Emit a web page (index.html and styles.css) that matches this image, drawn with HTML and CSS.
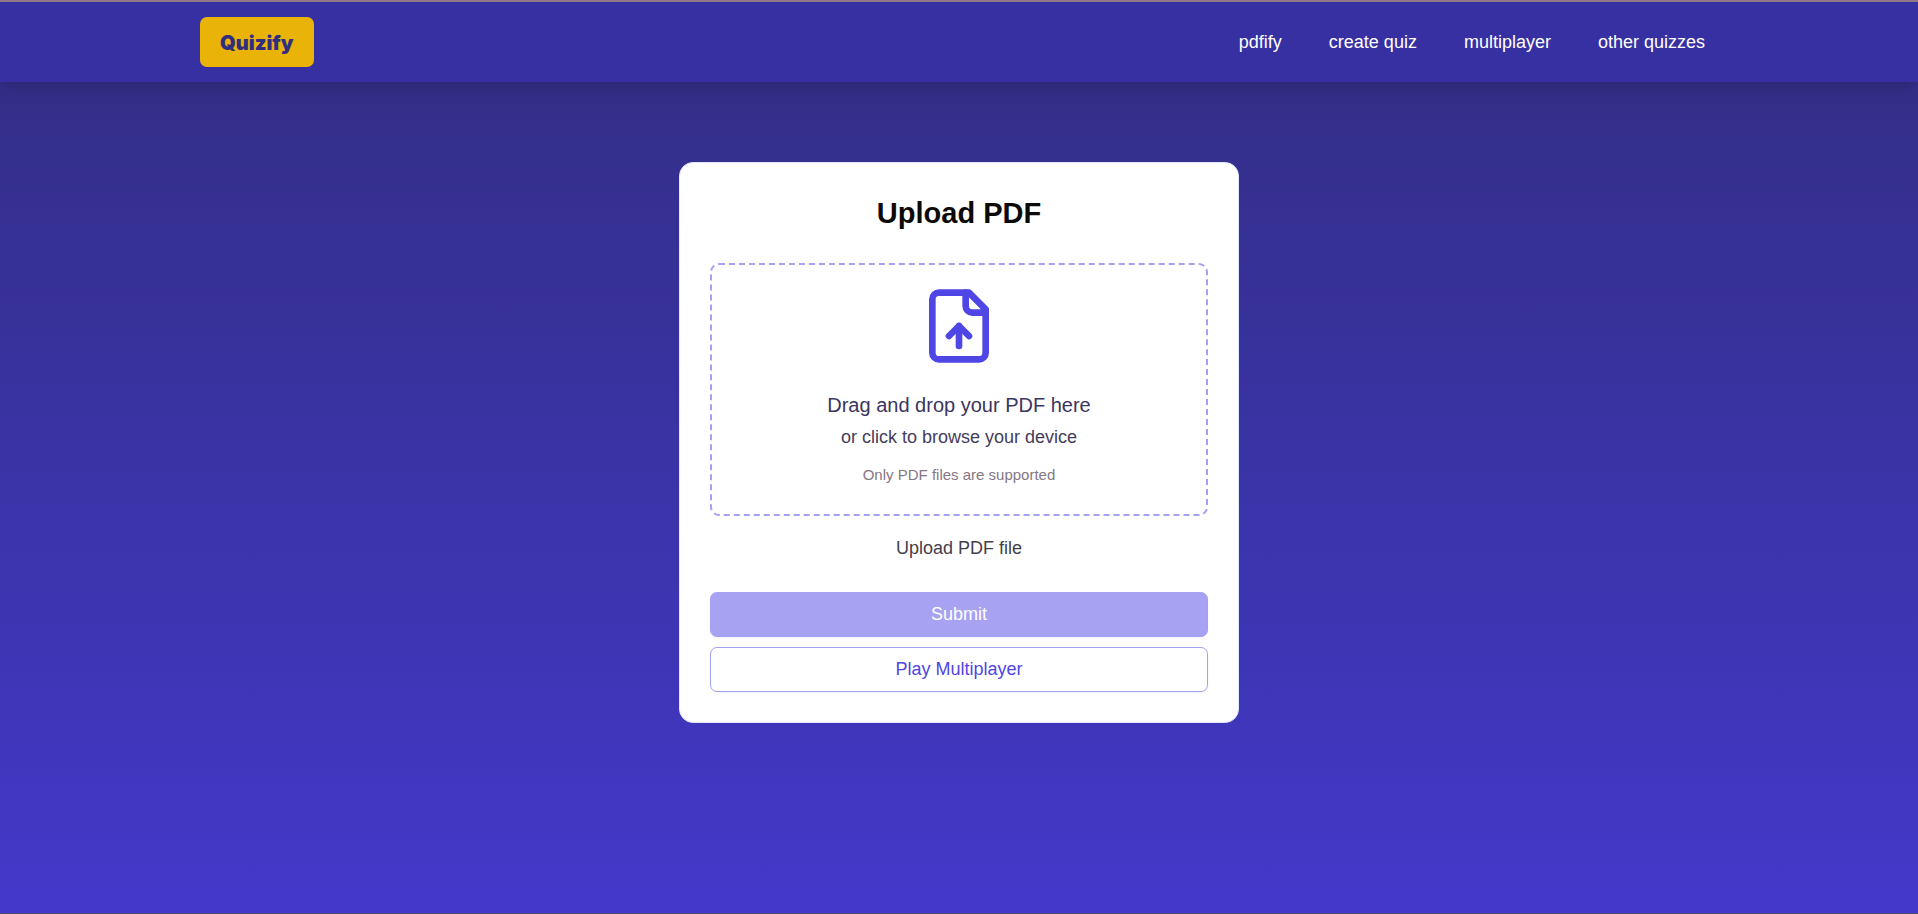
FILE: index.html
```html
<!DOCTYPE html>
<html lang="en">
<head>
    <meta charset="UTF-8">
    <meta name="viewport" content="width=device-width, initial-scale=1.0">
    <title>Quizify</title>
    <link rel="stylesheet" href="styles.css">
</head>
<body>
    <header class="navbar">
        <a class="logo" href="#">Quizify</a>
        <nav class="nav-links">
            <a href="#">pdfify</a>
            <a href="#">create quiz</a>
            <a href="#">multiplayer</a>
            <a href="#">other quizzes</a>
        </nav>
    </header>

    <main class="page">
        <form class="card">
            <h1 class="card-title">Upload PDF</h1>
            <label class="dropzone" for="pdfFile">
                <svg class="upload-icon" viewBox="0 0 24 24" fill="none" stroke="currentColor" stroke-width="2" stroke-linecap="round" stroke-linejoin="round" aria-hidden="true">
                    <path d="M15 2H6a2 2 0 0 0-2 2v16a2 2 0 0 0 2 2h12a2 2 0 0 0 2-2V7Z"/>
                    <path d="M14 2v4a2 2 0 0 0 2 2h4"/>
                    <path d="M12 12v6"/>
                    <path d="m15 15-3-3-3 3"/>
                </svg>
                <span class="drop-title">Drag and drop your PDF here</span>
                <span class="drop-text">or click to browse your device</span>
                <span class="drop-hint">Only PDF files are supported</span>
                <input class="file-input" type="file" id="pdfFile" accept="application/pdf">
            </label>
            <p class="status">Upload PDF file</p>
            <div class="actions">
                <button class="btn btn-primary" type="submit" disabled>Submit</button>
                <button class="btn btn-outline" type="button">Play Multiplayer</button>
            </div>
        </form>
    </main>
</body>
</html>
```
FILE: styles.css
```css
* {
    box-sizing: border-box;
}
body {
    display: flex;
    flex-direction: column;
    min-height: 100vh;
    margin: 0;
    border-top: 2px solid #8d7a86;
    border-bottom: 1px solid #4b4a6b;
    font-family: "Liberation Sans", Arial, sans-serif;
    font-size: 18px;
    background: linear-gradient(to bottom, #312e81, #4338ca);
}

/* Navbar */
.navbar {
    display: flex;
    align-items: center;
    justify-content: space-between;
    height: 80px;
    padding: 0 213px 0 200px;
    background-color: #3730a3;
    box-shadow: 0 11px 16px -3px rgba(0, 0, 0, 0.1), 0 4px 7px -4px rgba(0, 0, 0, 0.1);
}
.logo {
    padding: 12px 20px 10px;
    border-radius: 7px;
    background-color: #eab308;
    color: #312e81;
    font-family: Inter, "Liberation Sans", sans-serif;
    font-size: 20px;
    font-weight: 900;
    line-height: 28px;
    text-decoration: none;
}
.nav-links {
    display: flex;
    gap: 47px;
}
.nav-links a {
    color: #fff;
    text-decoration: none;
}

/* Upload card */
.page {
    display: flex;
    flex: 1;
    flex-direction: column;
    align-items: center;
    padding: 80px 16px;
}
.card {
    width: 100%;
    max-width: 560px;
    padding: 30px;
    border: 1px solid #e0e7ff;
    border-radius: 14px;
    background-color: #fff;
    text-align: center;
}
.card-title {
    margin: 0 0 30px;
    color: #0c0a09;
    font-size: 29px;
    line-height: 40px;
}
.dropzone {
    position: relative;
    display: flex;
    flex-direction: column;
    align-items: center;
    padding: 21px 16px 28px;
    border: 2px dashed #a5a1f2;
    border-radius: 9px;
    cursor: pointer;
}
.upload-icon {
    width: 80px;
    height: 80px;
    margin-bottom: 23px;
    color: #4f46e5;
}
.drop-title {
    color: #3b3561;
    font-size: 20px;
    line-height: 32px;
}
.drop-text {
    margin-bottom: 11px;
    color: #443c5c;
    line-height: 32px;
}
.drop-hint {
    color: #857783;
    font-size: 15px;
    line-height: 22px;
}
.file-input {
    position: absolute;
    inset: 0;
    width: 100%;
    opacity: 0;
    cursor: pointer;
}
.status {
    margin: 18px 0 30px;
    color: #44404a;
    line-height: 28px;
}
.actions {
    display: flex;
    flex-direction: column;
    gap: 10px;
}
.btn {
    height: 45px;
    border: 1px solid #a5a1f2;
    border-radius: 7px;
    font-family: inherit;
    font-size: 18px;
    box-shadow: 0 1px 2px rgba(0, 0, 0, 0.05);
}
.btn-primary {
    background-color: #a7a2f2;
    color: #fff;
}
.btn-outline {
    background-color: #fff;
    color: #4f46e5;
}
```
